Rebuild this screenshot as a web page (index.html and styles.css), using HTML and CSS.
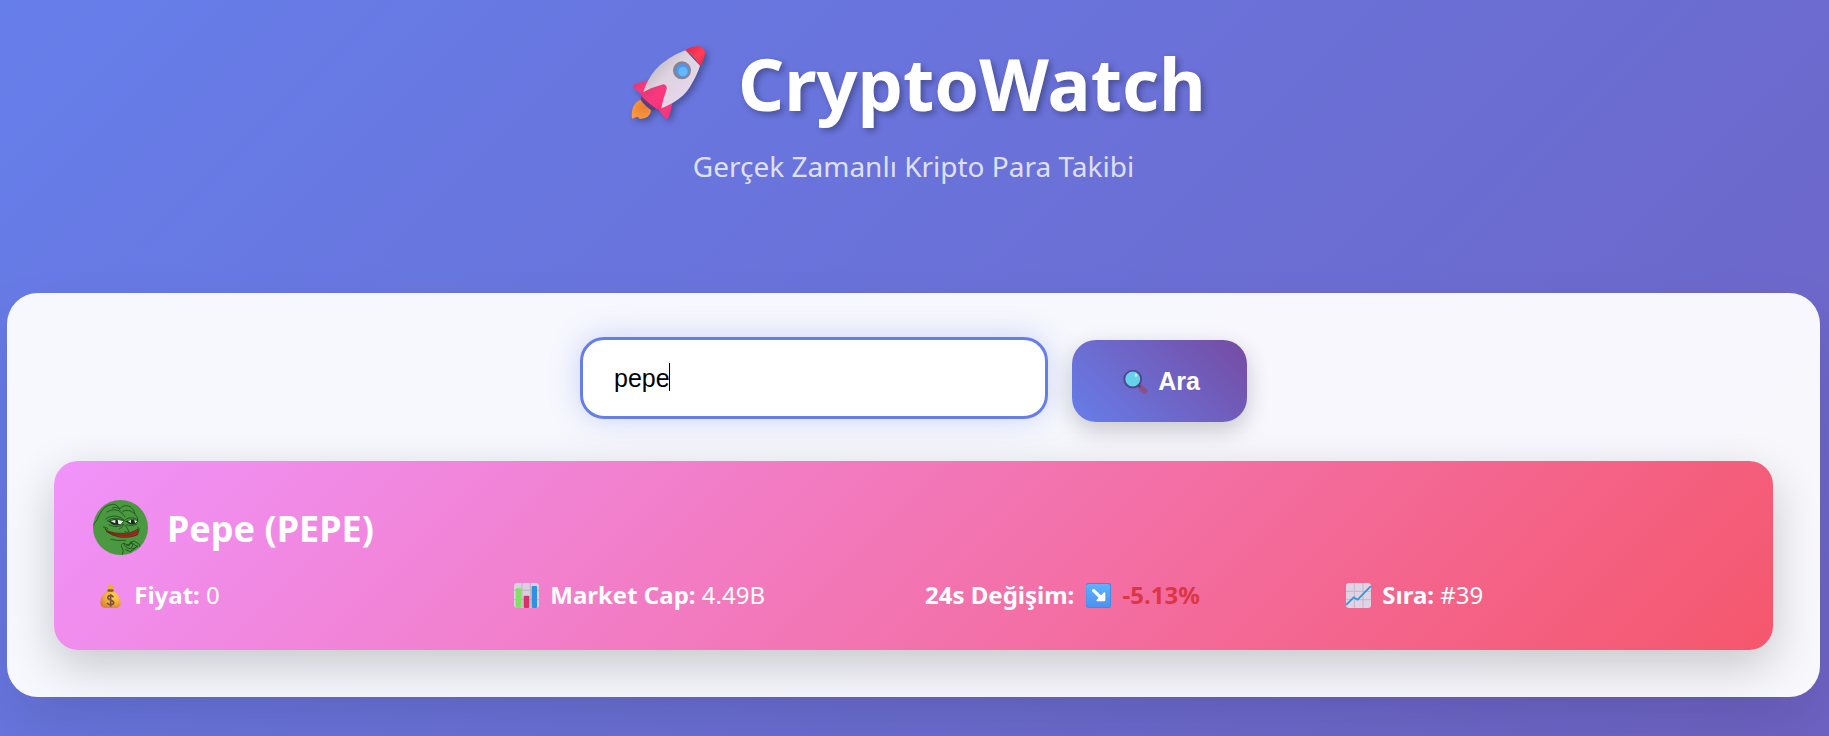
FILE: index.html
```html
<!DOCTYPE html>
<html lang="tr">
<head>
<meta charset="utf-8">
<meta name="viewport" content="width=device-width, initial-scale=1">
<title>CryptoWatch</title>
<link rel="stylesheet" href="styles.css">
</head>
<body>
<header class="header">
  <h1 class="title">
    <svg class="rocket" viewBox="42 28 225 222" aria-hidden="true">
      <defs>
        <linearGradient id="hull" x1="0" y1="0" x2="1" y2="1"><stop offset=".15" stop-color="#b9b3b8"/><stop offset=".42" stop-color="#ddd3e0"/><stop offset="1" stop-color="#ecd8f2"/></linearGradient>
        <linearGradient id="fin" x1="0" y1="0" x2="1" y2="1"><stop offset="0" stop-color="#e0346a"/><stop offset=".5" stop-color="#f8387f"/><stop offset="1" stop-color="#ff2f74"/></linearGradient>
        <linearGradient id="nose" x1="0" y1="0" x2="1" y2="1"><stop offset="0" stop-color="#e8203c"/><stop offset=".55" stop-color="#ff3f58"/><stop offset="1" stop-color="#e02a48"/></linearGradient>
        <radialGradient id="flame" cx=".6" cy=".4" r=".7"><stop offset="0" stop-color="#e98134"/><stop offset="1" stop-color="#ff9a3c"/></radialGradient>
      </defs>
      <path d="M70 190Q60 192 51 206Q42 222 45 246Q55 242 61 240Q65 241 68 247Q99 245 102 222L92 206Z" fill="url(#flame)"/>
      <path d="M72 178Q70 194 84 205Q98 222 112 220L126 208L84 172Z" fill="#574080"/>
      <path d="M98 129L54 142Q45 146 50 153L75 176L104 153Z" fill="url(#fin)"/>
      <path d="M121 212Q132 232 147 246Q153 247 156 239Q164 219 167 193L136 192Z" fill="url(#fin)"/>
      <path d="M205 41Q151 61 115 99Q88 132 78 169L130 216Q196 190 219 150Q240 116 249 87Z" fill="url(#hull)"/>
      <path d="M205 41Q223 28 248 29Q265 36 264 53Q260 73 250 88Q233 60 205 41Z" fill="url(#nose)"/>
      <path d="M75 168Q107 151 139 143Q151 145 149 157Q139 185 132 217L121 218Q102 207 72 178Q72 172 75 168Z" fill="url(#fin)"/>
      <circle cx="195" cy="101" r="27" fill="#8a828f"/>
      <circle cx="196" cy="101" r="20" fill="#4b98ee"/>
      <circle cx="198" cy="105" r="14" fill="#67b7ff"/>
    </svg>
    <span>CryptoWatch</span>
  </h1>
  <p class="subtitle">Gerçek Zamanlı Kripto Para Takibi</p>
</header>

<main class="panel">
  <form class="search" onsubmit="return false">
    <div class="search-field">
      <input class="search-input" type="text" value="pepe" aria-label="Kripto para ara">
      <span class="caret" aria-hidden="true"></span>
    </div>
    <button class="search-button" type="submit">
      <svg class="glass" viewBox="38 27 77 77" aria-hidden="true">
        <path d="M85 79L94 73Q113 89 114 95Q113 104 102 103Q90 94 85 87Z" fill="#8e4f88"/>
        <path d="M82 75L91 82" stroke="#493d72" stroke-width="7"/>
        <circle cx="68" cy="58" r="26" fill="#66d1ea" stroke="#50458f" stroke-width="6"/>
        <ellipse cx="78" cy="46" rx="4" ry="5" fill="#b8f0fa"/>
      </svg>
      <span>Ara</span>
    </button>
  </form>

  <section class="coin">
    <div class="coin-head">
      <svg class="avatar" viewBox="24 24 165 165" role="img" aria-label="Pepe">
        <defs><clipPath id="round"><circle cx="106.500" cy="106.500" r="82.500"/></clipPath></defs>
        <g clip-path="url(#round)" fill="none" stroke="#173c18" stroke-width="2" stroke-linecap="round">
          <path d="M20 20H195V195H20Z" fill="#4a9940" stroke="none"/>
          <path d="M24 101Q37 84 44 67Q56 42 77 38Q94 33 104 51Q117 35 136 44Q148 52 150 67Q160 76 159 88"/>
          <path d="M66 60Q83 49 101 56Q112 62 119 73M82 48Q95 42 105 53M113 58Q131 49 148 64M62 81Q82 65 108 77L121 88"/>
          <path d="M66 87Q86 71 116 85M122 82Q138 72 157 82"/>
          <path d="M72 88Q90 77 116 89Q107 101 87 98Q77 95 72 88ZM124 88Q139 79 158 86Q154 98 137 96Q127 93 124 88Z" fill="#172b1a"/>
          <path d="M76 87L91 84V94ZM98 83L115 88L107 97L100 96ZM128 87L138 84V93ZM148 84L157 87L150 94Z" fill="#eef2eb" stroke="none"/>
          <path d="M72 98Q92 110 116 97Q112 107 103 111M125 99Q140 105 156 96M120 99Q127 107 132 119Q126 123 119 119"/>
          <path d="M61 110Q66 115 70 118Q90 125 110 124Q138 126 158 111Q163 118 158 128Q140 137 107 136Q78 130 66 120Z" fill="#a8301c" stroke="#3d2417" stroke-width="2"/>
          <path d="M68 120Q92 131 121 130Q144 130 158 119" stroke="#5d2016"/>
          <path d="M55 105Q63 104 69 110M159 105Q165 111 162 117M78 142Q96 148 122 145"/>
          <path d="M112 189Q119 176 110 165Q107 155 117 154L132 161Q137 146 147 147L163 157Q168 164 162 171Q149 183 132 187M117 155Q122 169 136 170Q149 158 138 154L125 160M140 171Q153 171 157 161M122 173L136 179L154 165M137 150L158 165"/>
        </g>
      </svg>
      <h2 class="coin-name">Pepe (PEPE)</h2>
    </div>
    <div class="stats">
      <div class="stat">
        <svg class="icon" viewBox="23 12 77 77" aria-hidden="true">
          <defs><radialGradient id="bag" cx=".65" cy=".3" r=".8"><stop offset="0" stop-color="#ffd34d"/><stop offset=".55" stop-color="#f0aa3c"/><stop offset="1" stop-color="#d47f38"/></radialGradient></defs>
          <path d="M51 18Q57 20 60 15Q65 20 73 18Q74 25 69 32H54Q49 25 51 18Z" fill="#efae3c"/>
          <path d="M52 36Q31 49 30 72Q31 88 46 89H78Q93 87 93 71Q90 49 70 36Z" fill="url(#bag)"/>
          <rect x="52" y="31" width="19" height="8" rx="4" fill="#87513d"/>
          <path d="M71 56Q67 50 60 51Q51 53 54 60Q57 64 63 65Q73 68 71 75Q67 80 60 79Q54 78 51 73M62 46V85" fill="none" stroke="#79503b" stroke-width="5"/>
        </svg>
        <strong>Fiyat:</strong> <span>0</span>
      </div>
      <div class="stat">
        <svg class="icon" viewBox="0 0 75 75" aria-hidden="true">
          <rect width="75" height="75" rx="9" fill="#d9d1df"/>
          <path d="M0 22H75M0 50H75M24 0V75M49 0V75" stroke="#bcb4c5" stroke-width="3"/>
          <rect x="5" y="16" width="17" height="59" rx="3" fill="#83df65"/>
          <rect x="29" y="38" width="17" height="37" rx="3" fill="#d83268"/>
          <rect x="53" y="9" width="16" height="66" rx="3" fill="#2f91df"/>
        </svg>
        <strong>Market Cap:</strong> <span>4.49B</span>
      </div>
      <div class="stat">
        <strong>24s Değişim:</strong>
        <span class="change">
          <svg class="icon icon-inner" viewBox="0 0 75 75" aria-hidden="true">
            <defs><linearGradient id="key" x1="0" y1="0" x2="0" y2="1"><stop offset="0" stop-color="#5eb2ff"/><stop offset="1" stop-color="#4a92ee"/></linearGradient></defs>
            <rect width="75" height="75" rx="8" fill="#4389dc"/>
            <rect x="1" y="3" width="71" height="69" rx="7" fill="url(#key)"/>
            <path d="M23 23L46 45" stroke="#fff" stroke-width="10" stroke-linecap="round"/>
            <path d="M54 28Q58 26 58 32V52Q58 55 54 55H34Q29 54 32 50Z" fill="#fff"/>
          </svg>-5.13%</span>
      </div>
      <div class="stat">
        <svg class="icon" viewBox="0 0 75 75" aria-hidden="true">
          <rect width="75" height="75" rx="9" fill="#ded4e5"/>
          <path d="M0 25H75M0 50H75M25 0V75M51 0V75" stroke="#c2b7ca" stroke-width="3"/>
          <path d="M2 64L23 43L35 50L73 11" fill="none" stroke="#3296d8" stroke-width="5" stroke-linecap="round" stroke-linejoin="round"/>
        </svg>
        <strong>Sıra:</strong> <span>#39</span>
      </div>
    </div>
  </section>
</main>
</body>
</html>
```
FILE: styles.css
```css
* {
  box-sizing: border-box;
}

body {
  margin: 0;
  padding: 31px 9px 39px 7px;
  background: #667eea linear-gradient(135deg, #667eea 0%, #764ba2 100%) no-repeat;
  background-size: 100% 3000px;
  font-family: "Segoe UI", "Noto Sans", sans-serif;
  color: #fff;
}

.header {
  padding-bottom: 106px;
  text-align: center;
}

.title {
  display: flex;
  align-items: center;
  justify-content: center;
  gap: 32px;
  margin: 0;
  padding-left: 10px;
  font-size: 72px;
  line-height: 104px;
  font-weight: 700;
  text-shadow: 3px 3px 6px rgba(0, 0, 0, 0.3);
}

.rocket {
  width: 75px;
  height: 74px;
  filter: drop-shadow(3px 3px 3px rgba(0, 0, 0, 0.3));
}

.subtitle {
  margin: 10px 0 0;
  font-size: 28px;
  line-height: 42px;
  color: rgba(255, 255, 255, 0.8);
}

.panel {
  padding: 47px;
  border-radius: 31px;
  background: rgba(255, 255, 255, 0.95);
  box-shadow: 0 31px 62px rgba(0, 0, 0, 0.1);
}

.search {
  display: flex;
  justify-content: center;
  gap: 24px;
  margin-bottom: 39px;
}

.search-input,
.search-button {
  height: 82px;
  border-radius: 24px;
  font-family: Arial, "Liberation Sans", sans-serif;
  font-size: 25px;
}

.search-field {
  position: relative;
  width: 468px;
  transform: translateY(-3px);
}

.search-input {
  width: 100%;
  padding: 0 31px;
  border: 3px solid #667eea;
  outline: none;
  background: #fff;
  color: #000;
  box-shadow: 0 0 31px rgba(102, 126, 234, 0.3);
}

.caret {
  position: absolute;
  top: 26px;
  left: 89px;
  width: 1px;
  height: 28px;
  background: #000;
}

.search-button {
  display: flex;
  align-items: center;
  justify-content: center;
  gap: 10px;
  width: 175px;
  padding: 0 0 0 4px;
  border: 0;
  background: linear-gradient(45deg, #667eea, #764ba2);
  color: #fff;
  font-weight: 700;
  box-shadow: 0 8px 23px rgba(0, 0, 0, 0.2);
}

.glass {
  width: 25px;
  height: 25px;
}

.coin {
  padding: 39px;
  border-radius: 24px;
  background: linear-gradient(135deg, #f093fb 0%, #f5576c 100%);
  box-shadow: 0 16px 47px rgba(0, 0, 0, 0.2);
}

.coin-head {
  display: flex;
  align-items: center;
  gap: 19px;
  margin-bottom: 24px;
}

.avatar {
  width: 55px;
  height: 55px;
}

.coin-name {
  margin: 0;
  padding-top: 2px;
  font-size: 36px;
  line-height: 53px;
  font-weight: 700;
}

.stats {
  display: grid;
  grid-template-columns: repeat(4, 1fr);
  gap: 23px;
}

.stat {
  font-size: 24px;
  line-height: 32px;
  white-space: nowrap;
}

.icon {
  width: 25px;
  height: 25px;
  margin: 0 5px;
  vertical-align: -4px;
}

.icon-inner {
  margin-right: 12px;
}

.change {
  color: #dc3545;
  font-weight: 700;
}
```
